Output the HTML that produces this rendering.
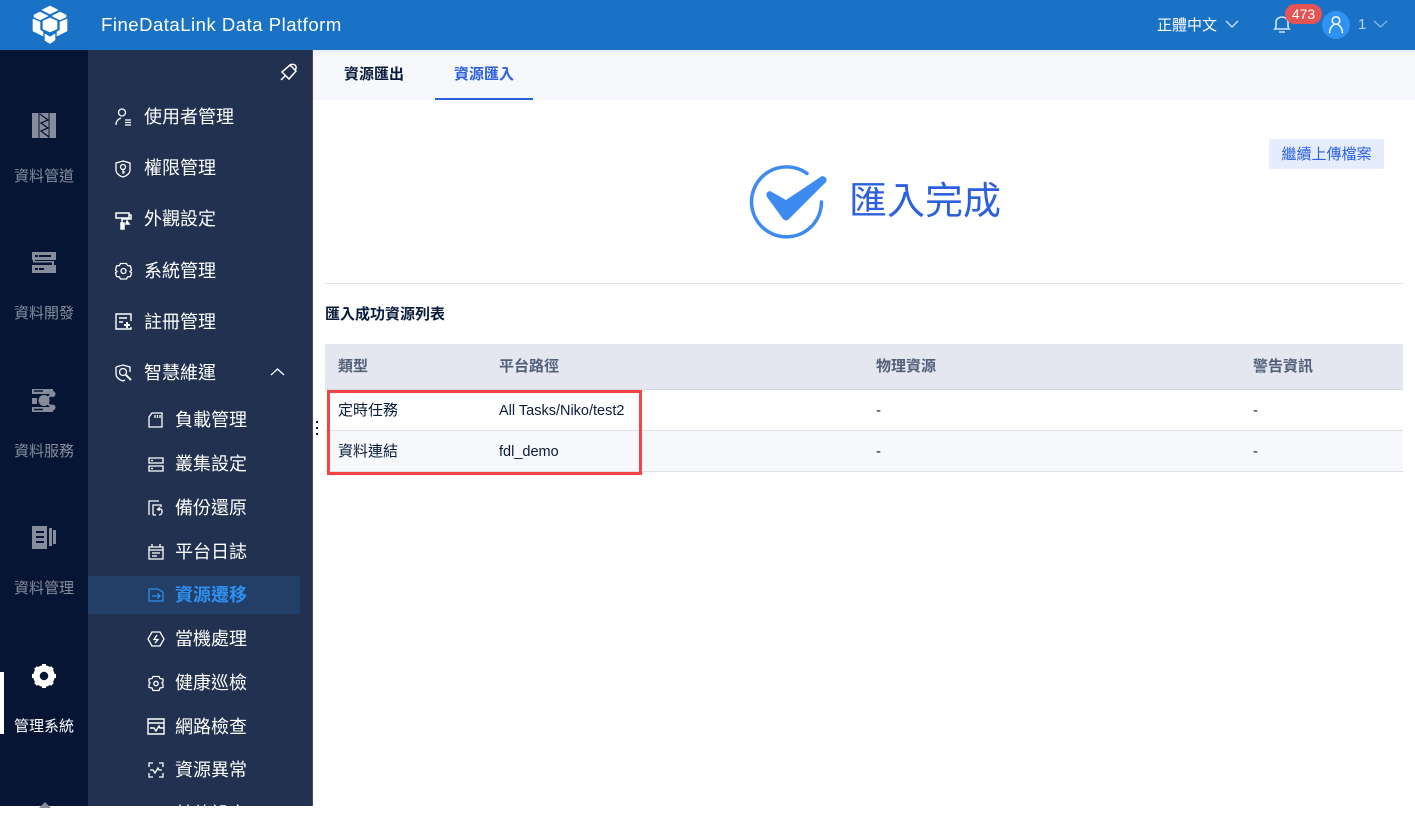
<!DOCTYPE html>
<html><head><meta charset="utf-8">
<style>
html,body{margin:0;padding:0;background:#fff}
body{width:1415px;height:806px;overflow:hidden;position:relative;font-family:"Liberation Sans","Noto Sans CJK TC",sans-serif;}
.a{position:absolute;white-space:nowrap}
.t{font-family:"Liberation Sans","WenQuanYi Zen Hei","Noto Sans CJK TC",sans-serif}
svg{position:absolute;overflow:visible}
.m{left:144px;font-size:18px;line-height:24px;color:#fff}
.s{left:175px;font-size:18px;line-height:24px;color:#fff}
.r{left:14px;font-size:15px;line-height:20px;color:#868c9c}
.c{font-size:15px;line-height:20px;color:#0a1c3c}
.h{font-size:15px;line-height:20px;color:#525f78;font-weight:bold}
</style></head><body class="t">
<div class="a" style="left:0;top:0;width:1415px;height:50px;background:#1a72c6"></div>
<div class="a" style="left:0;top:50px;width:88px;height:756px;background:#061533"></div>
<div class="a" style="left:88px;top:50px;width:225px;height:756px;background:#21314f"></div>
<div class="a" style="left:312px;top:50px;width:1px;height:756px;background:#3e4c66"></div>
<div class="a" style="left:313px;top:50px;width:1102px;height:50px;background:linear-gradient(#ebecf1 0,#f7f8fc 6px)"></div>

<svg style="left:32px;top:5px" width="36" height="40" viewBox="0 0 36 40" fill="#fff" stroke="#fff" stroke-width=".6" stroke-linejoin="round"><path d="M18 1l8 4-8 4-8-4zM8 7l8 4-8 4-6-3V10zM28 7l6 3v2l-6 3-8-4zM18 13l7 3v8l-7 3-7-3v-8zM1 14l7 3v8l3 2v4l-10-5zM35 14v12l-10 5v-4l3-2v-8zM13 29l5 3 5-3v6l-5 3.500-5-3z"/></svg>
<div class="a" style="left:101px;top:13px;font-size:18.500px;line-height:24px;color:#fff;letter-spacing:.52px">FineDataLink Data Platform</div>

<div class="a" style="left:1157px;top:16px;font-size:15px;line-height:20px;color:#fff">正體中文</div>
<svg style="left:1225px;top:19px" width="14" height="10" fill="none" stroke="#dbe8f6" stroke-width="1.300"><path d="M1 2l6 6 6-6"/></svg>
<svg style="left:1273px;top:15px" width="18" height="19" fill="none" stroke="#d5e5f5" stroke-width="1.600"><path d="M2 14c1-1 1-2 1-7 0-3 3-5 6-5s6 2 6 5c0 5 0 6 1 7zM6 17h6"/></svg>
<div class="a" style="left:1285px;top:4px;width:37px;height:20px;border-radius:10px;background:#e45454;color:#fff;font-size:14px;line-height:20px;text-align:center">473</div>
<div class="a" style="left:1322px;top:11px;width:28px;height:28px;border-radius:50%;background:#3093f2"></div>
<svg style="left:1322px;top:11px" width="28" height="28" fill="none" stroke="#fff" stroke-width="1.500"><circle cx="14" cy="9.500" r="3.800"/><path d="M7.500 22c0-4 2-7 4.500-8.500M20.500 22c0-4-2-7-4.500-8.500"/></svg>
<div class="a" style="left:1358px;top:15px;font-size:15px;line-height:20px;color:#b5d2ee">1</div>
<svg style="left:1373px;top:19px" width="15" height="10" fill="none" stroke="#8ab6e2" stroke-width="1.300"><path d="M1 2l6.500 6 6.500-6"/></svg>

<!-- rail -->
<svg style="left:32px;top:113px" width="24" height="25" fill="#868c9c"><path d="M0 0h24v25H0z"/><path d="M7 0v25M17 0v25" stroke="#061533" stroke-width="1"/><path d="M8 1l8 6-7 3 7 5-7 3 8 6" fill="none" stroke="#061533" stroke-width="1.300"/></svg>
<div class="a r" style="top:167px">資料管道</div>
<svg style="left:32px;top:252px" width="24" height="21" fill="#868c9c"><path d="M0 0h24v8H0zM0 13h24v8H0zM1 8h2v1h19v4h-2v-2.500H1z"/><path d="M3 4h3M7 4h12M3 17h3M7 17h5" stroke="#061533" stroke-width="2"/></svg>
<div class="a r" style="top:304px">資料開發</div>
<svg style="left:32px;top:389px" width="24" height="23" fill="#868c9c"><path d="M0 0h21v5H0zM0 9h5v6H0zM0 18h21v5H0z"/><path d="M2 2h9M2 20.500h9" stroke="#061533" stroke-width="1.500"/><circle cx="12" cy="11.500" r="5.500"/><circle cx="20.500" cy="5" r="3"/><circle cx="20.500" cy="18.500" r="3"/><path d="M12 11.500L20.500 5M12 11.500l8.500 7" stroke="#868c9c" stroke-width="2"/></svg>
<div class="a r" style="top:442px">資料服務</div>
<svg style="left:32px;top:526px" width="24" height="23" fill="#868c9c"><path d="M0 0h15v23H0zM17 2h3v18h-3zM21 4h3v14h-3z"/><path d="M4 6h8M4 11h8M4 16h8" stroke="#061533" stroke-width="2"/></svg>
<div class="a r" style="top:579px">資料管理</div>
<div class="a" style="left:0;top:672px;width:4px;height:62px;background:#fff"></div>
<svg style="left:31px;top:663px" width="26" height="26" viewBox="0 0 26 26"><circle cx="13" cy="13" r="7.500" fill="none" stroke="#fff" stroke-width="6.500"/><path d="M13 1v24M1 13h24M4.500 4.500l17 17M21.500 4.500l-17 17" stroke="#fff" stroke-width="4" stroke-dasharray="4.500 15 4.500"/></svg>
<div class="a r" style="top:717px;color:#fff">管理系統</div>
<svg style="left:36px;top:802px" width="18" height="6" fill="#868c9c"><path d="M3 6l6-6 6 6z"/></svg>

<!-- pin -->
<svg style="left:280px;top:63px" width="18" height="18" fill="none" stroke="#fff" stroke-width="1.500"><path d="M2 9l8-7 6 6-7 8zM9 3c1-2 4-2 6-1 2 2 1 4 0 5M1 17l4-4"/></svg>

<!-- main menu -->
<svg style="left:115px;top:108px" width="17" height="18" fill="none" stroke="#fff" stroke-width="1.300"><circle cx="7" cy="4.500" r="3.500"/><path d="M1 17c0-4 2-6 5-7M10 12h6M10 14.500h6M10 17h6"/></svg>
<div class="a m" style="top:105px">使用者管理</div>
<svg style="left:115px;top:160px" width="16" height="18" fill="none" stroke="#fff" stroke-width="1.300"><path d="M8 1l7 2v7c0 3-3 6-7 7-4-1-7-4-7-7V3z"/><circle cx="8" cy="7" r="2.500"/><path d="M8 9.500V14M8 12h2"/></svg>
<div class="a m" style="top:156px">權限管理</div>
<svg style="left:115px;top:212px" width="17" height="17" fill="none" stroke="#fff" stroke-width="1.500"><path d="M1 1h13v5H1zM14 3h2v4H7v4"/><path d="M6 11h3v6H6zM12 9l2 3h-3z" fill="#fff"/></svg>
<div class="a m" style="top:207px">外觀設定</div>
<svg style="left:115px;top:262px" width="17" height="18" fill="none" stroke="#fff" stroke-width="1.300"><path d="M5.500 1.500h6l1 2 3 .5 1 4.500-1.500 1 1.500 1.500-1 3.500-3 .5-1 2h-6l-1-2-3-.5-1-3.500 1.500-1.500-1.500-1 1-4.500 3-.5z"/><circle cx="8.500" cy="9" r="2.500"/></svg>
<div class="a m" style="top:259px">系統管理</div>
<svg style="left:115px;top:313px" width="17" height="17" fill="none" stroke="#fff" stroke-width="1.400"><path d="M16 8V1H1v15h15v-2M4 5h8M4 9h4"/><path d="M9 12h6M12 9v6" stroke-width="2"/></svg>
<div class="a m" style="top:310px">註冊管理</div>
<svg style="left:115px;top:364px" width="17" height="18" fill="none" stroke="#fff" stroke-width="1.300"><path d="M8 1l7 2v5M1 3l7-2M1 3v7c0 3 3 6 7 7l2-1"/><circle cx="8" cy="8" r="3.500"/><path d="M10 10l6 6" stroke-width="2"/></svg>
<div class="a m" style="top:361px">智慧維運</div>
<svg style="left:270px;top:367px" width="15" height="10" fill="none" stroke="#fff" stroke-width="1.300"><path d="M1 8l6.500-6 6.500 6"/></svg>

<!-- sub menu -->
<svg style="left:148px;top:412px" width="15" height="16" fill="none" stroke="#fff" stroke-width="1.300"><path d="M4 1h10v14H1V5zM7 3v3M9.500 3v3M12 3v3"/></svg>
<div class="a s" style="top:408px">負載管理</div>
<svg style="left:148px;top:457px" width="16" height="15" fill="none" stroke="#fff" stroke-width="1.300"><path d="M1 1h14v5H1zM1 9h14v5H1zM3 3.500h2M3 11.500h2"/></svg>
<div class="a s" style="top:452px">叢集設定</div>
<svg style="left:148px;top:500px" width="16" height="16" fill="none" stroke="#fff" stroke-width="1.300"><path d="M1 15V1h10M5 15V5h8v2M5 15h3M9 10l2-2v3M10 9h3c2 2 1 6-2 6"/></svg>
<div class="a s" style="top:496px">備份還原</div>
<svg style="left:148px;top:544px" width="16" height="16" fill="none" stroke="#fff" stroke-width="1.300"><path d="M1 3h14v12H1zM4 0v3M12 0v3M1 6h14M4 9h8M4 12h5"/></svg>
<div class="a s" style="top:540px">平台日誌</div>
<div class="a" style="left:88px;top:576px;width:212px;height:38px;background:#233f67"></div>
<svg style="left:148px;top:588px" width="16" height="14" fill="none" stroke="#2f8ff0" stroke-width="1.300"><path d="M15 4v9H1V1h9l5 3M4 8h8M9.500 5.500L12 8l-2.500 2.500"/></svg>
<div class="a s" style="top:583px;color:#2f8ff0;font-weight:bold">資源遷移</div>
<svg style="left:147px;top:631px" width="18" height="16" fill="none" stroke="#fff" stroke-width="1.300"><path d="M5 1h8l4 7-4 7H5L1 8z"/><path d="M10 4L7 8.500h4L8 12" /></svg>
<div class="a s" style="top:627px">當機處理</div>
<svg style="left:148px;top:675px" width="16" height="17" fill="none" stroke="#fff" stroke-width="1.300"><path d="M5 1.500h6l1 2 3 .5v3l-1 1 1 1.500v3l-3 .5-1 2.500H5l-1-2.500-3-.5v-3L2 8 1 7V4l3-.5z"/><circle cx="8" cy="8.500" r="2.200"/></svg>
<div class="a s" style="top:671px">健康巡檢</div>
<svg style="left:147px;top:718px" width="18" height="17" fill="none" stroke="#fff" stroke-width="1.400"><path d="M1 1h16v15H1zM1 5h16M3 10h4l2 3 3-5 1 2h4"/></svg>
<div class="a s" style="top:715px">網路檢查</div>
<svg style="left:148px;top:762px" width="16" height="16" fill="none" stroke="#fff" stroke-width="1.300"><path d="M1 5V1h4M11 1h4v4M1 11v4h4M11 15h4v-4M2 8h3l2 3 3-5 1 2h3"/></svg>
<div class="a s" style="top:758px">資源異常</div>
<div class="a s" style="top:802px;line-height:24px">其他設定</div>

<!-- drag -->
<div class="a" style="left:316px;top:421px;width:2px;height:2px;background:#0a1c3c;box-shadow:0 6px #0a1c3c,0 12px #0a1c3c"></div>

<!-- tabs -->
<div class="a" style="left:344px;top:65px;font-size:15px;line-height:20px;font-weight:bold;color:#0a1c3c">資源匯出</div>
<div class="a" style="left:454px;top:65px;font-size:15px;line-height:20px;font-weight:bold;color:#2c60de">資源匯入</div>
<div class="a" style="left:435px;top:98px;width:98px;height:2px;background:#2c60de"></div>

<!-- button -->
<div class="a" style="left:1269px;top:139px;width:115px;height:30px;border-radius:2px;background:#e5edfd;color:#2c60de;font-size:15px;line-height:31px;text-align:center">繼續上傳檔案</div>

<!-- success -->
<svg style="left:750px;top:164px" width="80" height="76" fill="none"><path d="M57 9.500A35 35 0 1 0 71.500 38" stroke="#3d8bf0" stroke-width="3.500" stroke-linecap="round"/><path d="M20 27L36 36L72 12Q78 13 76 18L39 55Q36 58 33 55L17 33Q15 28 20 27Z" fill="#3d8bf0"/></svg>
<div class="a" style="left:849px;top:178px;font-size:38px;line-height:48px;color:#2c60de">匯入完成</div>

<div class="a" style="left:325px;top:283px;width:1078px;height:1px;background:#e3e5ea"></div>
<div class="a" style="left:325px;top:305px;font-size:15px;line-height:20px;font-weight:bold;color:#0a1c3c;">匯入成功資源列表</div>

<!-- table -->
<div class="a" style="left:325px;top:344px;width:1078px;height:45px;background:#e4e7f0;border-bottom:1px solid #d3d6df"></div>
<div class="a" style="left:325px;top:431px;width:1078px;height:40px;background:#f7f8fc"></div>
<div class="a" style="left:325px;top:430px;width:1078px;height:1px;background:#dfe1e9"></div>
<div class="a" style="left:325px;top:471px;width:1078px;height:1px;background:#dfe1e9"></div>
<div class="a h" style="left:338px;top:357px">類型</div>
<div class="a h" style="left:499px;top:357px">平台路徑</div>
<div class="a h" style="left:876px;top:357px">物理資源</div>
<div class="a h" style="left:1253px;top:357px">警告資訊</div>
<div class="a c" style="left:338px;top:401px">定時任務</div>
<div class="a c" style="left:499px;top:401px;font-size:14.500px">All Tasks/Niko/test2</div>
<div class="a c" style="left:876px;top:401px">-</div>
<div class="a c" style="left:1253px;top:401px">-</div>
<div class="a c" style="left:338px;top:442px">資料連結</div>
<div class="a c" style="left:499px;top:442px;font-size:14.500px">fdl_demo</div>
<div class="a c" style="left:876px;top:442px">-</div>
<div class="a c" style="left:1253px;top:442px">-</div>
<div class="a" style="left:327px;top:390px;width:309px;height:79px;border:3px solid #f44444"></div>
</body></html>
